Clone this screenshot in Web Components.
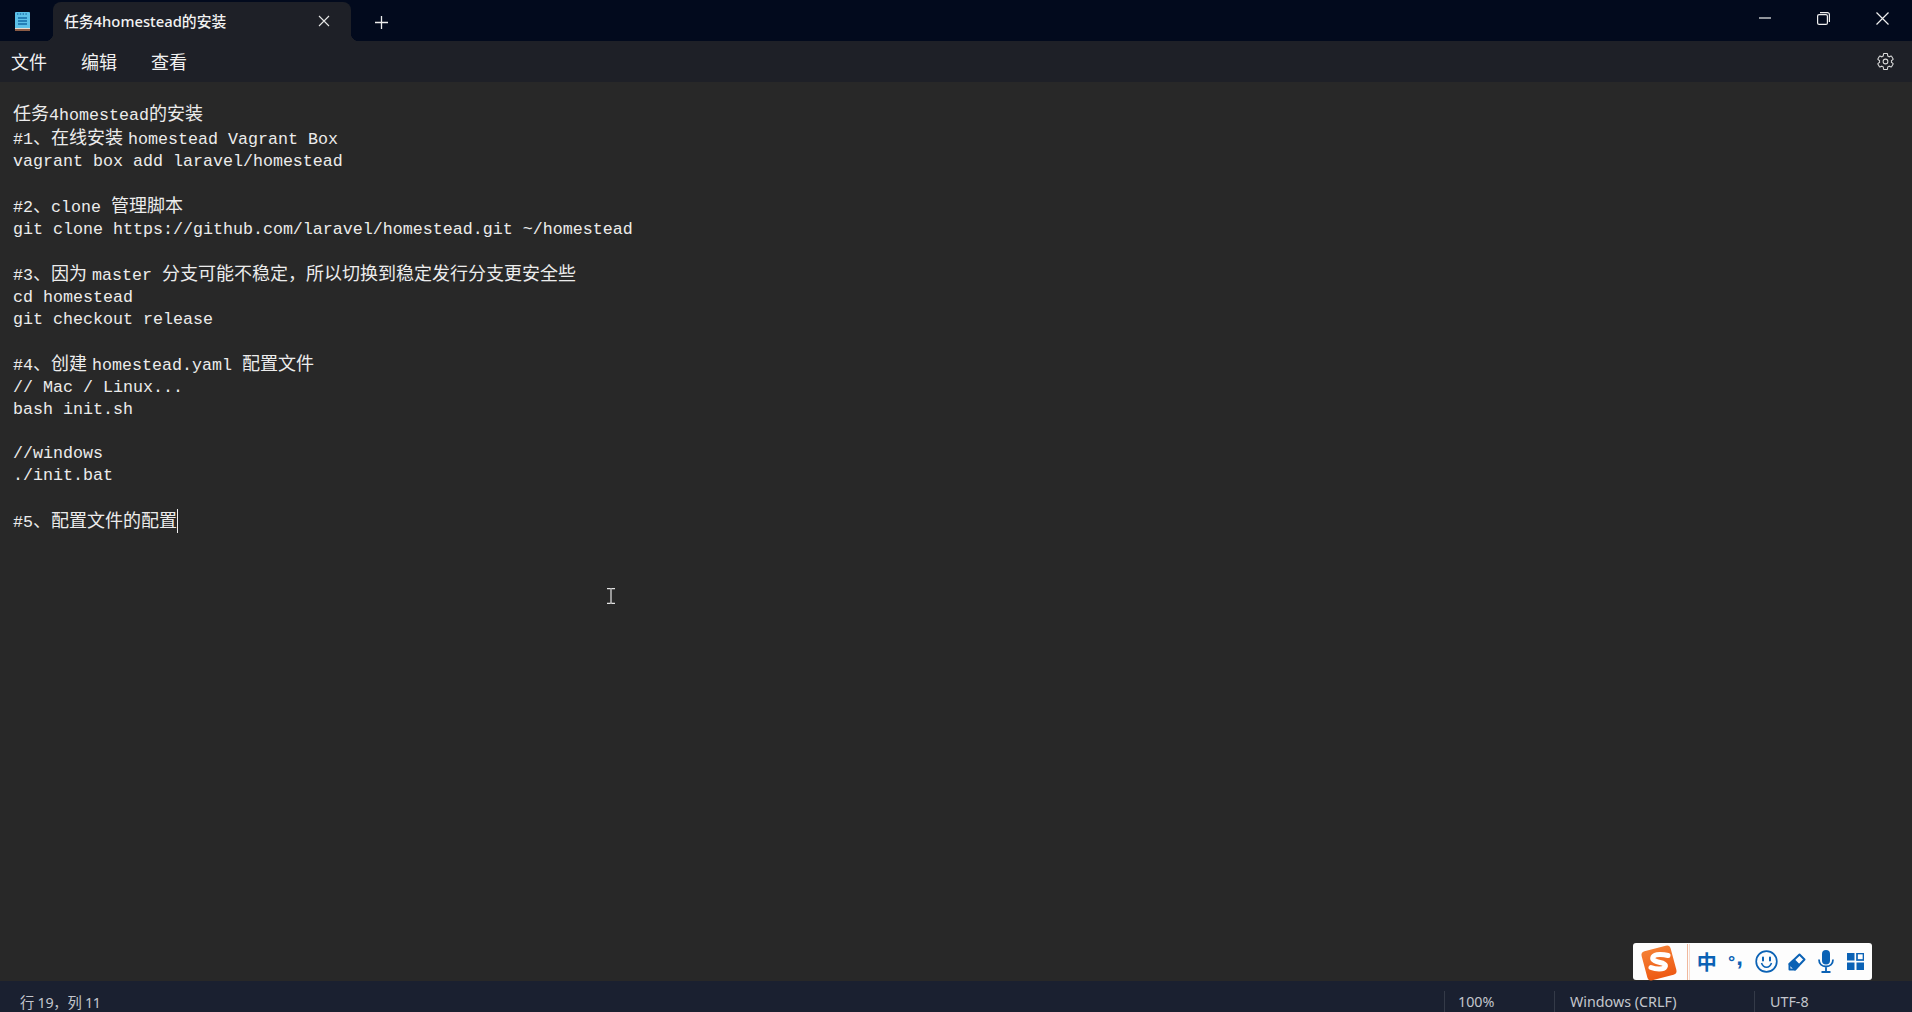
<!DOCTYPE html>
<html>
<head>
<meta charset="utf-8">
<title>任务4homestead的安装</title>
<style>
html, body { margin: 0; height: 100%; overflow: hidden; background: #282828; }
body { font-family: "Noto Sans", "Noto Sans CJK SC", sans-serif; }
</style>
</head>
<body>
<note-window></note-window>

<script>
const uiFont = `"Noto Sans", "Noto Sans CJK SC", sans-serif`

class TitleBar extends HTMLElement {
    constructor() {
        super()
        this.attachShadow({ mode: "open" }).innerHTML = `
        <style>
        :host { display: flex; height: 41px; background: #020a1d; color: #fff; align-items: flex-end; flex: none; }
        .logo { width: 15px; height: 20px; margin: 0 23px 10px 15px; flex: none; }
        .tab {
            position: relative; width: 298px; height: 39px; box-sizing: border-box; padding: 0 21px 2px 11px;
            display: flex; align-items: center; justify-content: space-between;
            background: #1e2027; border-radius: 8px 8px 0 0;
            font: 500 14.8px ${uiFont}; color: #f2f2f2;
        }
        .tab::before, .tab::after { content: ""; position: absolute; bottom: 0; width: 8px; height: 8px; }
        .tab::before { left: -8px; background: radial-gradient(circle at 0 0, transparent 8px, #1e2027 8.5px); }
        .tab::after { right: -8px; background: radial-gradient(circle at 100% 0, transparent 8px, #1e2027 8.5px); }
        .plus { width: 13px; height: 13px; margin: 0 0 12px 24px; flex: none; }
        .controls { margin-left: auto; display: flex; align-self: flex-start; align-items: center; height: 36px; padding-right: 23px; gap: 46px; }
        svg { display: block; }
        </style>
        <svg class="logo" viewBox="0 0 15 20">
            <rect y="1" width="15" height="17" rx="1" fill="#5cc0e8"/>
            <rect y="17" width="15" height="3" fill="#8a5a44"/>
            <rect y="17" width="15" height="1" fill="#e8dccf"/>
            <path d="M2 3h11" stroke="#1f76ad" stroke-width="1.4" stroke-dasharray="1.4 1.4"/>
            <path d="M3 7h9M3 10h9M3 13h9" stroke="#136aa5" stroke-width="1.6"/>
        </svg>
        <div class="tab">
            <span>任务4homestead的安装</span>
            <svg width="12" height="12" viewBox="0 0 12 12"><path d="M1 1l10 10M11 1L1 11" stroke="#e6e6e6" stroke-width="1.1"/></svg>
        </div>
        <svg class="plus" viewBox="0 0 13 13"><path d="M6.5 0v13M0 6.5h13" stroke="#ececec" stroke-width="1.3"/></svg>
        <div class="controls">
            <svg width="12" height="2" viewBox="0 0 12 2"><path d="M0 1h12" stroke="#f0f0f0" stroke-width="1.2"/></svg>
            <svg width="13" height="13" viewBox="0 0 13 13" fill="none" stroke="#f0f0f0" stroke-width="1.2"><rect x=".6" y="2.6" width="9.8" height="9.8" rx="1.5"/><path d="M3 .6h7.4a2 2 0 0 1 2 2V10"/></svg>
            <svg width="13" height="13" viewBox="0 0 13 13"><path d="M.5.5l12 12M12.5.5l-12 12" stroke="#f0f0f0" stroke-width="1.2"/></svg>
        </div>`
    }
}

class MenuBar extends HTMLElement {
    constructor() {
        super()
        this.attachShadow({ mode: "open" }).innerHTML = `
        <style>
        :host { display: flex; height: 41px; align-items: center; background: #1e2027; color: #f0f0f0; font: 18px ${uiFont}; flex: none; padding: 0 17px 2px 11px; box-sizing: border-box; }
        span { margin-right: 34px; }
        span:first-child { margin-right: 33px; }
        svg { margin-left: auto; position: relative; top: 1px; }
        </style>
        <span>文件</span><span>编辑</span><span>查看</span>
        <svg width="19" height="19" viewBox="0 0 24 24" fill="none" stroke="#dcdcdc" stroke-width="1.3">
            <path d="M19.43 12.98c.04-.32.07-.64.07-.98s-.03-.66-.07-.98l2.11-1.65c.19-.15.24-.42.12-.64l-2-3.46c-.12-.22-.39-.3-.61-.22l-2.49 1c-.52-.4-1.08-.73-1.69-.98l-.38-2.65C14.46 2.18 14.25 2 14 2h-4c-.25 0-.46.18-.49.42l-.38 2.65c-.61.25-1.17.59-1.69.98l-2.49-1c-.23-.09-.49 0-.61.22l-2 3.46c-.13.22-.07.49.12.64l2.11 1.65c-.04.32-.07.65-.07.98s.03.66.07.98l-2.11 1.65c-.19.15-.24.42-.12.64l2 3.46c.12.22.39.3.61.22l2.49-1c.52.4 1.08.73 1.69.98l.38 2.65c.03.24.24.42.49.42h4c.25 0 .46-.18.49-.42l.38-2.65c.61-.25 1.17-.59 1.69-.98l2.49 1c.23.09.49 0 .61-.22l2-3.46c.12-.22.07-.49-.12-.64l-2.11-1.65z"/>
            <circle cx="12" cy="12" r="3"/>
        </svg>`
    }
}

// t = taller line (has chinese in it), <i> = the narrow space the fallback font gives
const lines = [
    ['t', '任务4homestead的安装'],
    ['t', '#1、在线安装<i> </i>homestead Vagrant Box'],
    ['', 'vagrant box add laravel/homestead'],
    ['', ''],
    ['t', '#2、clone 管理脚本'],
    ['', 'git clone https://github.com/laravel/homestead.git ~/homestead'],
    ['', ''],
    ['t', '#3、因为<i> </i>master 分支可能不稳定，所以切换到稳定发行分支更安全些'],
    ['', 'cd homestead'],
    ['', 'git checkout release'],
    ['', ''],
    ['t', '#4、创建<i> </i>homestead.yaml 配置文件'],
    ['', '// Mac / Linux...'],
    ['', 'bash init.sh'],
    ['', ''],
    ['', '//windows'],
    ['', './init.bat'],
    ['', ''],
    ['t', '#5、配置文件的配置<b></b>']
]

class EditorPane extends HTMLElement {
    constructor() {
        super()
        this.attachShadow({ mode: "open" }).innerHTML = `
        <style>
        :host {
            display: block; position: relative; flex: 1; background: #282828; color: #ececec;
            padding: 21px 0 0 13px; box-sizing: border-box;
            font: 16.67px "Liberation Mono", "Noto Sans CJK SC", monospace;
        }
        .line { height: 22px; line-height: 22px; white-space: pre; }
        .line.t { height: 24px; line-height: 26px; }
        .line.t span { font-size: 18px; line-height: 1; }
        i { font-family: "Noto Sans CJK SC", sans-serif; font-size: 18px; font-style: normal; line-height: 1; word-spacing: 1px; }
        b { display: inline-block; width: 1px; height: 24px; background: #f0f0f0; vertical-align: -6px; }
        .cursor { position: absolute; left: 604px; top: 506px; }
        </style>
        ${lines.map(l => `<div class="line ${l[0]}">${l[1].replace(/[\u3000-\u9fff\uff00-\uffef]+/g, m => `<span>${m}</span>`)}</div>`).join('')}
        <svg class="cursor" width="14" height="16" viewBox="0 0 14 16" fill="none" stroke="#e4e4e4" stroke-width="1.2"><path d="M3 .6h3l1 .6 1-.6h3M3 15.4h3l1-.6 1 .6h3M7 1v14"/></svg>`
    }
}

class StatusBar extends HTMLElement {
    constructor() {
        super()
        this.attachShadow({ mode: "open" }).innerHTML = `
        <style>
        :host { display: flex; height: 31px; flex: none; background: #1a2030; color: #c3c6cd; font: 14.3px ${uiFont}; padding-left: 20px; white-space: nowrap; overflow: hidden; }
        .cell { padding-left: 15px; box-sizing: border-box; height: 21px; margin-top: 10px; border-left: 1px solid #343a48; line-height: 21px; }
        .pos { margin-right: auto; line-height: 31px; padding-top: 6px; letter-spacing: -.25px; }
        .zoom { width: 110px; padding-left: 13px; }
        .eol { width: 200px; }
        .enc { width: 158px; }
        </style>
        <span class="pos">行 19，列 11</span>
        <div class="cell zoom">100%</div>
        <div class="cell eol">Windows (CRLF)</div>
        <div class="cell enc">UTF-8</div>`
    }
}

class ImeToolbar extends HTMLElement {
    constructor() {
        super()
        this.attachShadow({ mode: "open" }).innerHTML = `
        <style>
        :host {
            position: absolute; left: 1633px; top: 943px; width: 239px; height: 37px;
            display: flex; align-items: center; background: #fdfdfd; border-radius: 3px; color: #0b62b5;
        }
        .s { margin: 0 0 0 6px; flex: none; position: relative; top: 1px; }
        .sep { width: 3px; height: 36px; margin: 0 3px 0 8px; border-left: 1px solid #f0b89c; border-right: 1px solid #f7dccf; box-sizing: border-box; flex: none; }
        .icon { width: 29.6px; display: flex; justify-content: center; align-items: center; flex: none; height: 37px; }
        .zh { font: 700 20px "Noto Sans CJK SC", sans-serif; position: relative; left: -1px; }
        .pt { font: 700 24px "Liberation Sans", sans-serif; position: relative; left: -2px; }
        .pt span { position: relative; top: 1px; font-size: 18px; font-weight: 700; }
        .pt em { font-style: normal; position: relative; top: -5px; margin-left: 1px; }
        </style>
        <svg class="s" width="40" height="40" viewBox="0 0 40 40">
            <defs><linearGradient id="o" x1="0" y1="0" x2="0" y2="1"><stop offset="0" stop-color="#f47e33"/><stop offset="1" stop-color="#ee5a14"/></linearGradient></defs>
            <rect x="5" y="5" width="30" height="30" rx="4" transform="rotate(-15 20 20)" fill="url(#o)"/>
            <path d="M29 12.5c-4-1.2-13-2.200-15 1.500-1.600 3.500 4 4.800 7 5.500 3 .7 6.500 1.800 5 4.500-1.500 2.700-9 2.500-14 .5" fill="none" stroke="#fff" stroke-width="5" stroke-linecap="round"/>
        </svg>
        <div class="sep"></div>
        <div class="icon zh">中</div>
        <div class="icon pt"><span>°</span><em>,</em></div>
        <div class="icon"><svg width="23" height="23" viewBox="0 0 23 23" fill="none" stroke="#0b62b5" stroke-width="1.700"><circle cx="11.500" cy="11.500" r="10.300"/><path d="M6.500 13c1 3 3 4.200 5 4.200s4-1.200 5-4.200" stroke-width="1.500"/><path d="M8 7.500v3M15 7.500v3" stroke-width="2" stroke-linecap="round"/></svg></div>
        <div class="icon"><svg width="20" height="20" viewBox="0 0 20 20" fill="none" stroke="#0b62b5" stroke-width="2" stroke-linejoin="round"><path d="M12.500 2.500l5 5L8 17.500H2.500V12z"/><path d="M2.500 12l5.500 5.500L12 13 7 8z" fill="#0b62b5"/></svg></div>
        <div class="icon"><svg width="16" height="23" viewBox="0 0 16 23" fill="none" stroke="#0b62b5" stroke-width="1.800"><rect x="4" y="0" width="8" height="14.500" rx="4" fill="#0b62b5" stroke="none"/><path d="M1 9.500c0 4.500 3 7 7 7s7-2.500 7-7M8 16.500V21M3.500 22h9"/></svg></div>
        <div class="icon"><svg width="17" height="17" viewBox="0 0 17 17" fill="#0b62b5"><rect width="7.500" height="7.500" y="0"/><rect x="10" y="0.500" width="6.500" height="6.500" fill="none" stroke="#0b62b5" stroke-width="1.700"/><rect y="9.500" width="7.500" height="7.500"/><rect x="9.500" y="9.500" width="7.500" height="7.500"/></svg></div>`
    }
}

class NoteWindow extends HTMLElement {
    constructor() {
        super()
        this.attachShadow({ mode: "open" }).innerHTML = `
        <style>
        :host { display: flex; flex-direction: column; position: relative; width: 1912px; height: 1012px; overflow: hidden; }
        </style>
        <title-bar></title-bar>
        <menu-bar></menu-bar>
        <editor-pane></editor-pane>
        <status-bar></status-bar>
        <ime-toolbar></ime-toolbar>`
    }
}

customElements.define('title-bar', TitleBar)
customElements.define('menu-bar', MenuBar)
customElements.define('editor-pane', EditorPane)
customElements.define('status-bar', StatusBar)
customElements.define('ime-toolbar', ImeToolbar)
customElements.define('note-window', NoteWindow)
</script>
</body>
</html>
